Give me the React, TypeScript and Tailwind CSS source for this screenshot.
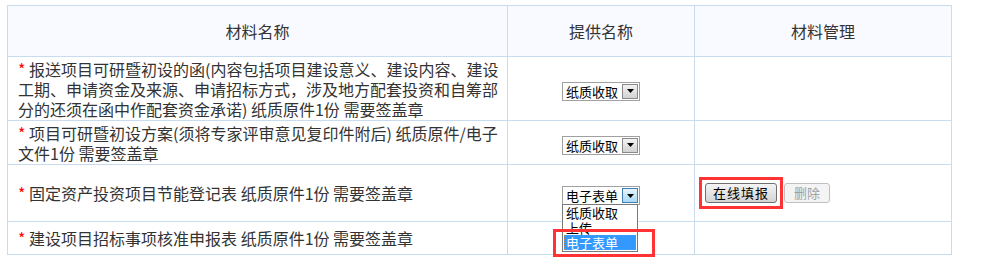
import React from 'react';

const FONT = '"Noto Sans CJK SC", "Microsoft YaHei", sans-serif';

type Row = { lines: string[]; value: string; h: string; open?: boolean; fill?: boolean };

const rows: Row[] = [
    {
        lines: [
            '报送项目可研暨初设的函(内容包括项目建设意义、建设内容、建设',
            '工期、申请资金及来源、申请招标方式，涉及地方配套投资和自筹部',
            '分的还须在函中作配套资金承诺) 纸质原件1份 需要签盖章',
        ],
        value: '纸质收取',
        h: 'h-[64px]',
    },
    {
        lines: ['项目可研暨初设方案(须将专家评审意见复印件附后) 纸质原件/电子', '文件1份 需要签盖章'],
        value: '纸质收取',
        h: 'h-[44px]',
    },
    {
        lines: ['固定资产投资项目节能登记表 纸质原件1份 需要签盖章'],
        value: '电子表单',
        h: 'h-[57px]',
        open: true,
        fill: true,
    },
    {
        lines: ['建设项目招标事项核准申报表 纸质原件1份 需要签盖章'],
        value: '',
        h: 'h-[33px]',
    },
];

function FakeSelect({ value, open }: { value: string; open?: boolean }) {
    return (
        <span className="relative inline-flex h-[19px] w-[78px] items-center border border-[#a0a0a0] bg-white align-middle">
            <span className="flex-1 pl-[3px] text-left text-[13px] leading-[17px] text-black">{value}</span>
            <span
                className={`mr-[1px] flex h-[15px] w-[16px] items-center justify-center border ${open
                        ? 'border-[#3c7fb1] bg-gradient-to-b from-[#e6f4fc] to-[#a9d9f6]'
                        : 'border-[#8a8a8a] bg-gradient-to-b from-[#f3f3f3] to-[#d2d2d2]'
                    }`}
            >
                <svg width="7" height="4" viewBox="0 0 7 4">
                    <polygon points="0,0 7,0 3.5,4" fill="#000" />
                </svg>
            </span>
            {open && (
                <>
                    {/* opened option list */}
                    <span className="absolute left-[-1px] top-[17px] z-10 flex w-[76px] flex-col border border-[#7a7a7a] bg-white text-left text-[13px] leading-[15px] text-black">
                        <span className="pl-[3px]">纸质收取</span>
                        <span className="pl-[3px]">上传</span>
                        <span className="mx-[1px] mb-[1px] border border-dotted border-[#c08040] bg-[#3399ff] pl-[1px] leading-[13px] text-white">电子表单</span>
                    </span>
                    {/* annotation box */}
                    <span className="absolute left-[-10px] top-[42px] z-20 h-[28px] w-[102px] border-[3px] border-[#ff3333]" />
                </>
            )}
        </span>
    );
}

export default function App() {
    return (
        <div className="h-[268px] w-[982px] bg-white pl-[7px] pt-[5px]" style={{ fontFamily: FONT }}>
            <table className="w-[945px] table-fixed border-collapse text-[16px] text-[#333]">
                <colgroup>
                    <col className="w-[500px]" />
                    <col className="w-[187px]" />
                    <col className="w-[257px]" />
                </colgroup>
                <thead>
                    <tr className="h-[51px] bg-[#f9faff]">
                        <th className="border border-[#c8dbef] font-normal">材料名称</th>
                        <th className="border border-[#c8dbef] font-normal">提供名称</th>
                        <th className="border border-[#c8dbef] font-normal">材料管理</th>
                    </tr>
                </thead>
                <tbody>
                    {rows.map((row, i) => (
                        <tr key={i} className={row.h}>
                            <td className="whitespace-nowrap border border-[#c8dbef] px-[10px] align-middle leading-[20px]">
                                {row.lines.map((line, j) => (
                                    <React.Fragment key={j}>
                                        {j === 0 && <span className="text-[#ff0000]">* </span>}
                                        {line}
                                        {j < row.lines.length - 1 && <br />}
                                    </React.Fragment>
                                ))}
                            </td>
                            <td className="border border-[#c8dbef] text-center align-middle">
                                {row.value && <FakeSelect value={row.value} open={row.open} />}
                            </td>
                            <td className="border border-[#c8dbef] pl-[4px] align-middle">
                                {row.fill && (
                                    <div className="flex items-center">
                                        <span className="inline-flex border-[3px] border-[#ff3333] p-[3px]">
                                            <button className="h-[20px] w-[72px] rounded-[3px] border border-[#707070] bg-gradient-to-b from-[#f4f4f4] to-[#d4d4d4] text-[13px] leading-[18px] tracking-[1px] text-black">
                                                在线填报
                                            </button>
                                        </span>
                                        <button
                                            disabled
                                            className="ml-[1px] h-[20px] w-[46px] rounded-[3px] border border-[#c0c0c0] bg-[#f4f4f4] text-[13px] leading-[18px] text-[#a0a0a0]"
                                        >
                                            删除
                                        </button>
                                    </div>
                                )}
                            </td>
                        </tr>
                    ))}
                </tbody>
            </table>
        </div>
    );
}
